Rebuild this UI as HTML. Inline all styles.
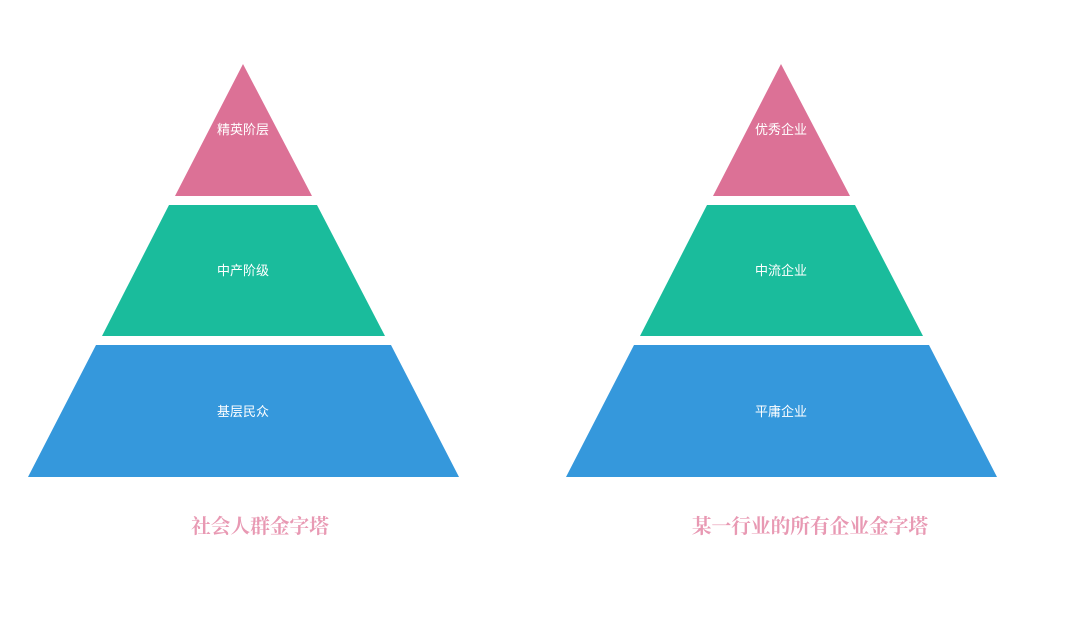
<!DOCTYPE html>
<html><head><meta charset="utf-8"><style>
body{margin:0;width:1079px;height:636px;background:#fff;overflow:hidden;position:relative;font-family:"Liberation Sans","Noto Sans CJK SC",sans-serif}
svg{position:absolute;left:0;top:0}
.t{position:absolute;top:510px;font-family:"Liberation Serif","Noto Serif CJK SC",serif;font-weight:bold;font-size:19.7px;color:#e899b3;white-space:nowrap;transform:translateX(-50%)}
</style></head><body>
<svg width="1079" height="636" font-family="Liberation Sans, Noto Sans CJK SC, sans-serif" font-size="13" fill="#fff" text-anchor="middle">
<g>
<polygon points="243,64 312,196 175,196" fill="#dc7196"/>
<polygon points="169,205 317,205 385,336 102,336" fill="#1abc9c"/>
<polygon points="96,345 391,345 459,477 28,477" fill="#3598dc"/>
<text x="243" y="134">精英阶层</text>
<text x="243" y="275">中产阶级</text>
<text x="243" y="416">基层民众</text>
</g>
<g transform="translate(538,0)">
<polygon points="243,64 312,196 175,196" fill="#dc7196"/>
<polygon points="169,205 317,205 385,336 102,336" fill="#1abc9c"/>
<polygon points="96,345 391,345 459,477 28,477" fill="#3598dc"/>
<text x="243" y="134">优秀企业</text>
<text x="243" y="275">中流企业</text>
<text x="243" y="416">平庸企业</text>
</g>
</svg>
<div class="t" style="left:260px">社会人群金字塔</div>
<div class="t" style="left:810px">某一行业的所有企业金字塔</div>
</body></html>
